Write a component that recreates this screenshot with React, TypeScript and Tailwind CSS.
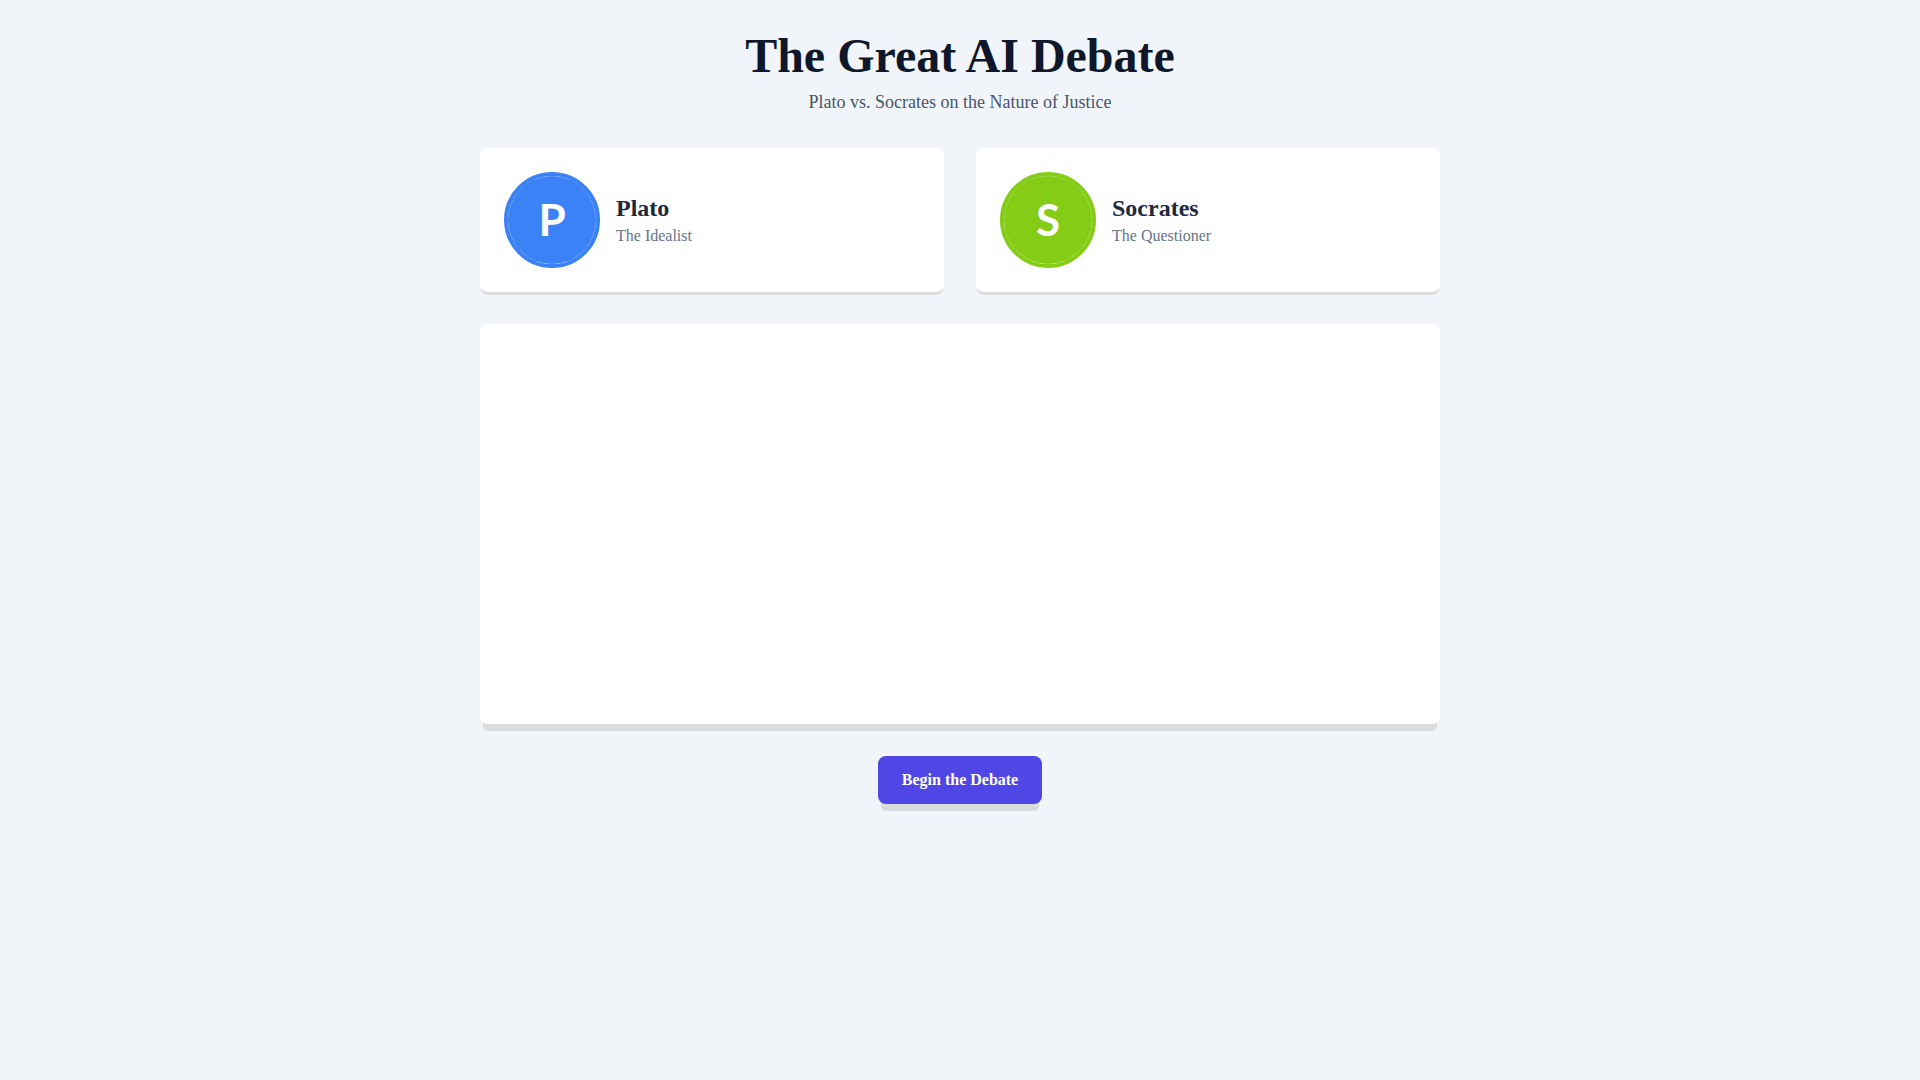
const debaters = [
  { name: "Plato", role: "The Idealist", initial: "P", fill: "bg-[#3b82f6]", ring: "border-[#3b82f6]" },
  { name: "Socrates", role: "The Questioner", initial: "S", fill: "bg-[#84cc16]", ring: "border-[#84cc16]" },
];

export default function App() {
  return (
    <div className="min-h-screen bg-[#f1f5f9] p-8 font-['Liberation_Serif',serif]">
      <main className="mx-auto max-w-[960px]">
        <header className="mb-8 text-center">
          <h1 className="text-5xl font-bold text-[#0f172a]">The Great AI Debate</h1>
          <p className="mt-2 text-lg text-[#475569]">Plato vs. Socrates on the Nature of Justice</p>
        </header>
        <section className="mb-8 grid grid-cols-2 gap-8">
          {debaters.map((d) => (
            <article
              key={d.name}
              className="flex items-center gap-4 rounded-lg bg-white p-6 shadow-[0_4px_0_-1px_rgba(0,0,0,0.1)]"
            >
              <div className={`${d.ring} size-24 shrink-0 rounded-full border-4`}>
                <div className={`${d.fill} flex size-full items-center justify-center rounded-full pb-0.5 font-['Lato',sans-serif] text-[44px] leading-none font-bold text-white`}>
                  {d.initial}
                </div>
              </div>
              <div>
                <h2 className="text-2xl font-bold text-[#1e293b]">{d.name}</h2>
                <p className="text-base text-[#64748b]">{d.role}</p>
              </div>
            </article>
          ))}
        </section>
        <section className="mb-8 h-[400px] rounded-lg bg-white shadow-[0_10px_0_-3px_rgba(0,0,0,0.1)]" />
        <div className="text-center">
          <button className="rounded-lg bg-[#4f46e5] px-6 py-3 text-base font-bold text-white shadow-[0_10px_0_-3px_rgba(0,0,0,0.1)]">
            Begin the Debate
          </button>
        </div>
      </main>
    </div>
  );
}
